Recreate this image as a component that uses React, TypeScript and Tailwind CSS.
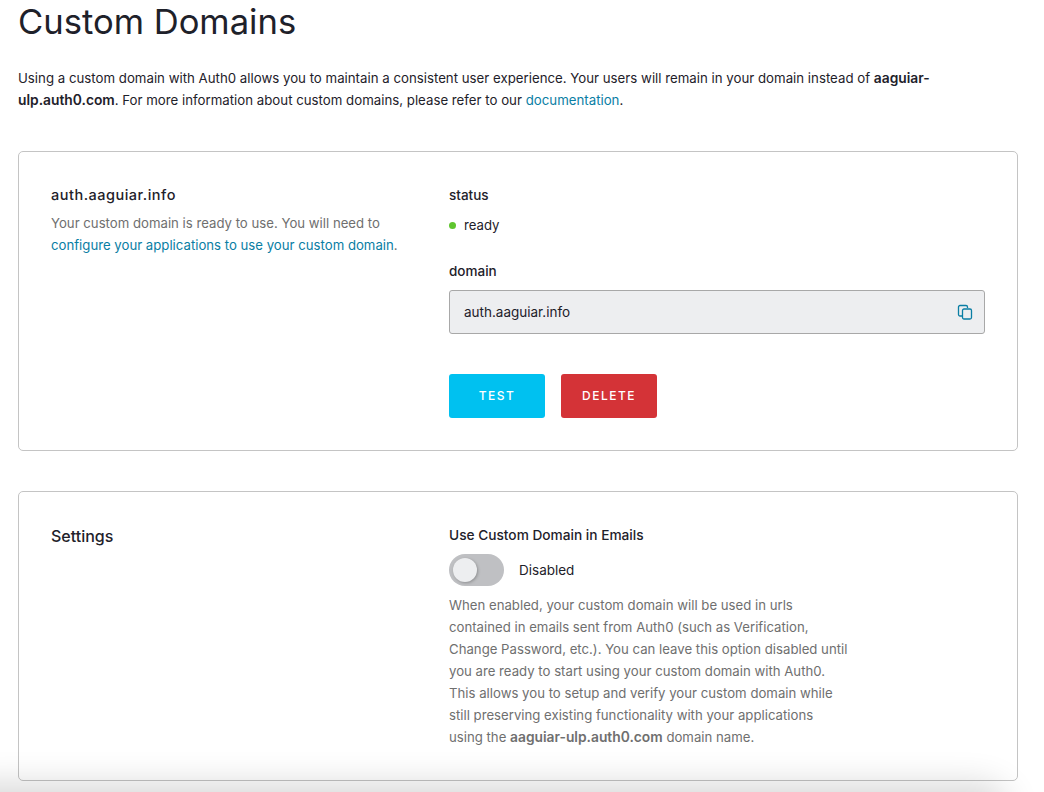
export default function App() {
  return (
    <div className="relative h-[792px] overflow-hidden bg-white font-['Inter',sans-serif] text-[13.2px] text-[#1e212a]">
      <main className="pl-[18px] pr-[26px]">
        <h1 className="h-[43px] text-[34.6px] leading-[43px] font-normal">Custom Domains</h1>

        <p className="mt-[24px] w-[925px] text-[13.25px] leading-[22px]">
          Using a custom domain with Auth0 allows you to maintain a consistent user experience. Your users will remain in your domain instead of <strong className="text-[13.8px] font-semibold">aaguiar-ulp.auth0.com</strong>. For more information about custom domains, please refer to our <a className="text-[#0a7ea4]">documentation</a>.
        </p>

        <section className="mt-[40px] flex h-[300px] rounded-[5px] border border-[#c4c4c4] pl-[32px] pt-[32px]">
          <div className="w-[398px]">
            <h2 className="text-[14.5px] leading-[22px] font-medium tracking-[0.5px]">auth.aaguiar.info</h2>
            <p className="mt-[6px] w-[352px] leading-[22px] text-[#6f6f6f]">
              Your custom domain is ready to use. You will need to <a className="text-[#0a7ea4]">configure your applications to use your custom domain</a>.
            </p>
          </div>
          <div className="w-[536px]">
            <div className="text-[13.5px] leading-[22px] font-medium">status</div>
            <div className="mt-[8px] flex items-center gap-[8px] leading-[22px]">
              <span className="h-[7px] w-[7px] rounded-full bg-[#5fc52e]" />
              ready
            </div>
            <div className="mt-[24px] text-[13.5px] leading-[22px] font-medium">domain</div>
            <div className="mt-[8px] flex h-[44px] items-center justify-between rounded-[3px] border border-[#a8a8a8] bg-[#edeef0] pl-[14px] pr-[11px] text-[13.5px]">
              <span>auth.aaguiar.info</span>
              <svg width="16" height="16" viewBox="0 0 16 16" fill="none" stroke="#0a7ea4" strokeWidth="1.3">
                <path d="M5 12H3a1.5 1.5 0 0 1-1.5-1.5V3A1.5 1.5 0 0 1 3 1.500h6A1.500 1.500 0 0 1 10.500 3v1" />
                <rect x="5.500" y="5" width="9" height="10" rx="1.500" />
              </svg>
            </div>
            <div className="mt-[40px] flex gap-[16px]">
              <button className="h-[44px] w-[96px] rounded-[3px] bg-[#00c1f0] text-[12px] font-medium tracking-[1.4px] text-white">TEST</button>
              <button className="h-[44px] w-[96px] rounded-[3px] bg-[#d43337] text-[12px] font-medium tracking-[1.5px] text-white">DELETE</button>
            </div>
          </div>
        </section>

        <section className="mt-[40px] flex h-[290px] rounded-[5px] border border-[#c4c4c4] pl-[32px] pt-[32px]">
          <h2 className="mt-[1px] w-[398px] text-[16px] leading-[22px] font-medium">Settings</h2>
          <div className="w-[400px]">
            <div className="text-[13.7px] leading-[22px] font-medium">Use Custom Domain in Emails</div>
            <div className="mt-[8px] flex h-[32px] items-center gap-[15px] text-[13.5px]">
              <span className="flex h-[32px] w-[55px] items-center rounded-full bg-[#bfc0c3] pl-[4px]">
                <span className="h-[24px] w-[24px] rounded-full bg-[#edeef0] shadow-[1px_1px_3px_rgba(0,0,0,0.25)]" />
              </span>
              Disabled
            </div>
            <p className="mt-[8px] leading-[22px] text-[#6f6f6f]">
              When enabled, your custom domain will be used in urls contained in emails sent from Auth0 (such as Verification, Change Password, etc.). You can leave this option disabled until you are ready to start using your custom domain with Auth0. This allows you to setup and verify your custom domain while still preserving existing functionality with your applications using the <strong className="text-[13.8px] font-semibold">aaguiar-ulp.auth0.com</strong> domain name.
            </p>
          </div>
        </section>
      </main>
      {/* shadow of the bar just under the fold */}
      <div className="absolute -left-[40px] top-[792px] h-[40px] w-[1040px] rounded-full shadow-[0_0_34px_8px_rgba(0,0,0,0.16)]" />
    </div>
  )
}
